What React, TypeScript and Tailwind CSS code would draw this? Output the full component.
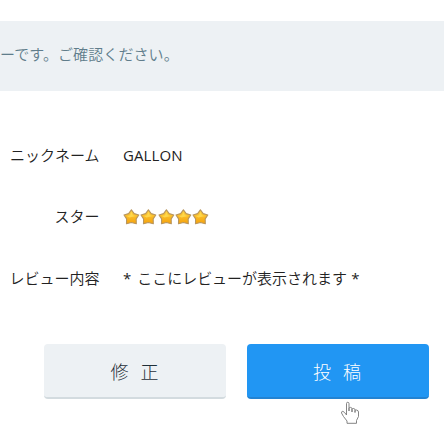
import type { ReactNode } from "react";

function Star() {
  return (
    <svg width="17.3" height="18" viewBox="0 0 17.3 18" className="shrink-0">
      <path
        d="M8.4 1.8 L11.2 5.6 L15.8 7 L13.2 10.9 L13.3 15.8 L8.4 14.5 L3.5 15.8 L3.6 10.9 L1 7 L5.6 5.6 Z"
        fill="url(#gold)"
        stroke="#b8965f"
        strokeWidth="1.1"
        strokeLinejoin="round"
      />
      <path d="M8.4 4 L9.9 7.3 L13.2 8 L6.5 9.6 L3.8 8 L7 7.2 Z" fill="#ffdf58" opacity="0.75" />
    </svg>
  );
}

function Row({ label, children }: { label: string; children: ReactNode }) {
  return (
    <div className="flex h-[61.5px] items-center whitespace-nowrap">
      <div className="w-[99.5px] shrink-0 text-right">{label}</div>
      <div className="ml-[23.5px] flex">{children}</div>
    </div>
  );
}

export default function App() {
  return (
    <div className="relative h-[444px] w-[444px] overflow-hidden bg-white pt-[21px] font-['Noto_Sans_CJK_JP',sans-serif] text-[15px] font-[350] text-[#222]">
      <svg width="0" height="0" className="absolute">
        <linearGradient id="gold" x1="0" y1="0" x2="0" y2="1">
          <stop offset="0" stopColor="#ffd33f" />
          <stop offset="1" stopColor="#f5a20c" />
        </linearGradient>
      </svg>
      <header className="flex h-[70px] items-center whitespace-nowrap bg-[#edf1f4] pb-[4px] tracking-[0.1px] text-[#607d8b]">
        ーです。ご確認ください。
      </header>
      <main className="pt-[33px]">
        <Row label="ニックネーム">
          <span className="font-['Open_Sans','Noto_Sans',sans-serif] font-normal tracking-[0.1px]">GALLON</span>
        </Row>
        <Row label="スター">
          <div className="flex pt-px">
            <Star />
            <Star />
            <Star />
            <Star />
            <Star />
          </div>
        </Row>
        <Row label="レビュー内容">
          <span>
            <span className="mr-[6px] font-['Open_Sans',sans-serif] font-normal">*</span>
            <span className="tracking-[-0.03px]">ここにレビューが表示されます</span>
            <span className="ml-[4.5px] font-['Open_Sans',sans-serif] font-normal">*</span>
          </span>
        </Row>
      </main>
      <div className="mt-[35.5px] flex gap-[21px] pl-[44px] text-[18px] font-light tracking-[12px]">
        <button className="h-[55px] w-[182px] rounded-[4px] border-b-[2px] border-[#d3dbdf] bg-[#edf1f4] pl-[11px] pt-[2px] text-[#1f2f38]">
          修正
        </button>
        <button className="h-[55px] w-[182px] rounded-[4px] border-b-[2px] border-[#2383d2] bg-[#2196f3] pl-[10px] pt-[2px] text-white">
          投稿
        </button>
      </div>
      <svg className="absolute left-[340px] top-[401px]" width="20" height="24" viewBox="0 0 20 24">
        <path
          d="M6.5 14 V2.5 Q6.5 1.3 7.7 1.3 Q9 1.3 9 2.5 V10 V7.3 Q9.2 6.3 10.5 6.4 Q12 6.5 12 7.8 V11 V8.2 Q12.4 7.2 13.7 7.5 Q15 7.7 15 8.8 V11.5 V9.6 Q15.4 8.8 16.5 9 Q18.5 9.4 18.5 11 V15.5 L16.5 19.5 V22.3 H7 V20 L3.5 15.5 L1.5 12 Q1.3 10.4 2.8 10.3 Q4.2 10.5 6.5 14"
          fill="white"
          stroke="#777"
          strokeWidth="0.9"
          strokeLinejoin="round"
        />
      </svg>
    </div>
  );
}
